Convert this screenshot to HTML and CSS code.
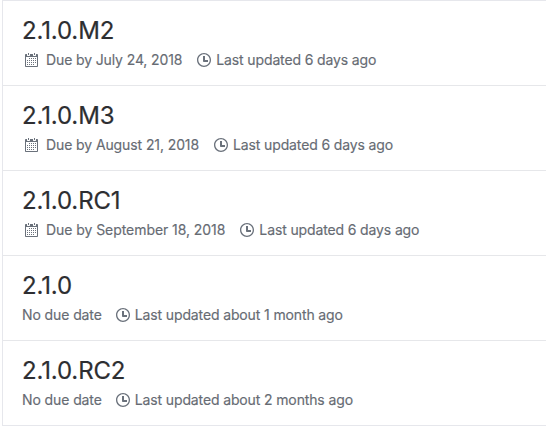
FILE: index.html
```html
<!DOCTYPE html>
<html lang="en">
<head>
<meta charset="utf-8">
<title>Milestones</title>
<link rel="stylesheet" href="styles.css">
</head>
<body>
<svg class="sprite">
<symbol id="cal" viewBox="0 0 14 16"><path fill-rule="evenodd" d="M13 2h-1v1.500c0 .28-.22.500-.5.500h-2c-.28 0-.5-.22-.5-.5V2H6v1.500c0 .28-.22.500-.5.500h-2c-.28 0-.5-.22-.5-.5V2H2c-.55 0-1 .45-1 1v11c0 .55.45 1 1 1h11c.55 0 1-.45 1-1V3c0-.55-.45-1-1-1zm0 12H2V5h11v9zM5 3H4V1h1v2zm6 0h-1V1h1v2zM6 7H5V6h1v1zm2 0H7V6h1v1zm2 0H9V6h1v1zm2 0h-1V6h1v1zM4 9H3V8h1v1zm2 0H5V8h1v1zm2 0H7V8h1v1zm2 0H9V8h1v1zm2 0h-1V8h1v1zm-8 2H3v-1h1v1zm2 0H5v-1h1v1zm2 0H7v-1h1v1zm2 0H9v-1h1v1zm2 0h-1v-1h1v1zm-8 2H3v-1h1v1zm2 0H5v-1h1v1zm2 0H7v-1h1v1zm2 0H9v-1h1v1z"/></symbol>
<symbol id="clock" viewBox="0 0 14 16"><path fill-rule="evenodd" d="M8 8h3v2H7c-.55 0-1-.45-1-1V4h2v4zM7 2.300c3.140 0 5.700 2.560 5.700 5.700s-2.560 5.700-5.700 5.700A5.710 5.710 0 0 1 1.300 8c0-3.140 2.560-5.700 5.700-5.700zM7 1C3.140 1 0 4.140 0 8s3.140 7 7 7 7-3.140 7-7-3.140-7-7-7z"/></symbol>
</svg>
<ul class="list">
<li><h2>2.1.0.M2</h2><div class="meta"><span class="due tight"><svg class="cal"><use href="#cal"/></svg><span>Due by July 24, 2018</span></span><span class="upd"><svg><use href="#clock"/></svg><span>Last updated 6 days ago</span></span></div></li>
<li><h2>2.1.0.M3</h2><div class="meta"><span class="due"><svg class="cal"><use href="#cal"/></svg><span>Due by August 21, 2018</span></span><span class="upd"><svg><use href="#clock"/></svg><span>Last updated 6 days ago</span></span></div></li>
<li><h2>2.1.0.RC1</h2><div class="meta"><span class="due loose"><svg class="cal"><use href="#cal"/></svg><span>Due by September 18, 2018</span></span><span class="upd"><svg><use href="#clock"/></svg><span>Last updated 6 days ago</span></span></div></li>
<li><h2>2.1.0</h2><div class="meta"><span class="due none">No due date</span><span class="upd"><svg><use href="#clock"/></svg><span>Last updated about 1 month ago</span></span></div></li>
<li><h2>2.1.0.RC2</h2><div class="meta"><span class="due none">No due date</span><span class="upd"><svg><use href="#clock"/></svg><span>Last updated about 2 months ago</span></span></div></li>
</ul>
</body>
</html>
```
FILE: styles.css
```css
* { box-sizing: border-box; }
body { margin: 0; background: #fff; overflow: hidden; font-family: Inter, "Liberation Sans", sans-serif; }
.list { list-style: none; margin: 0 0 0 2px; padding: 0; border: 1px solid #e6e7ec; border-right: 0; }
li { height: 85px; padding: 15px 0 0 19px; border-bottom: 1px solid #e6e7ea; }
li:last-child { height: 84px; border-bottom: 0; }
h2 { margin: 0; font-size: 24px; line-height: 30px; font-weight: 400; color: #2d2e31; letter-spacing: -0.14px; -webkit-text-stroke: 0.2px currentColor; }
.meta { display: flex; align-items: center; height: 20px; margin-top: 4px; font-size: 14px; line-height: 20px; color: #666b73; white-space: nowrap; letter-spacing: -0.13px; -webkit-text-stroke: 0.15px currentColor; }
.due, .upd { display: flex; align-items: center; }
.due { letter-spacing: -0.1px; }
.due.tight { letter-spacing: -0.12px; }
.due.loose { letter-spacing: -0.06px; }
.upd { margin-left: 15px; }
.due.none + .upd { margin-left: 14px; }
svg { width: 14px; height: 16px; fill: #6a717b; margin-right: 5px; flex: none; }
.cal { margin: 0 8px 0 2px; }
.sprite { display: block; width: 0; height: 0; margin: 0; }
```
